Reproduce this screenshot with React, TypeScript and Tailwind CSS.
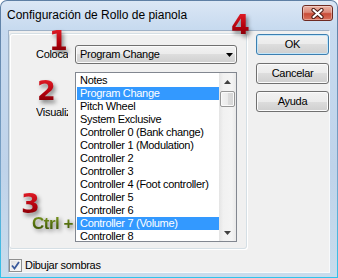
import React from "react";

const items = [
  "Notes",
  "Program Change",
  "Pitch Wheel",
  "System Exclusive",
  "Controller 0 (Bank change)",
  "Controller 1 (Modulation)",
  "Controller 2",
  "Controller 3",
  "Controller 4 (Foot controller)",
  "Controller 5",
  "Controller 6",
  "Controller 7 (Volume)",
  "Controller 8",
];
const selected = [1, 11];

const btnBase =
  "w-[73px] h-[21px] rounded-[3px] border flex items-center justify-center bg-[linear-gradient(#f2f2f2_0%,#ebebeb_50%,#dddddd_50%,#cfcfcf_100%)]";

function Arrow({ up }: { up?: boolean }) {
  return (
    <svg width="7" height="4" viewBox="0 0 7 4">
      {up ? (
        <polygon points="3.5,0 7,4 0,4" fill="#404040" />
      ) : (
        <polygon points="0,0 7,0 3.5,4" fill="#404040" />
      )}
    </svg>
  );
}

const redNum =
  "absolute font-['DejaVu_Sans',sans-serif] font-bold text-[27px] leading-[27px] tracking-normal text-transparent bg-clip-text bg-[linear-gradient(#e8202a,#b0000c_60%,#7a0006)] drop-shadow-[2px_3px_2px_rgba(0,0,0,0.45)]";

export default function App() {
  return (
    <div className="w-[338px] h-[278px] relative font-['Liberation_Sans',Arial,sans-serif] text-[11px] tracking-[-0.3px] leading-[13px] text-black">
      <div className="w-full h-full rounded-t-[7px] p-[1px] bg-[linear-gradient(#5e7fa4,#7aa3c8_60%,#2fc3ec)]">
        <div className="w-full h-full rounded-t-[6px] flex flex-col bg-[linear-gradient(#dbe7f5_0px,#c7daef_28px,#bfd3ea_60%,#c8dcec)]">
          {/* Title bar */}
          <div className="h-[29px] shrink-0 flex items-start justify-between pl-[6px] pr-[4px]">
            <div className="mt-[7px] text-[12px] leading-[14px] tracking-normal text-black">
              Configuración de Rollo de pianola
            </div>
            <div className="mt-[4px] w-[31px] h-[16px] rounded-[3px] border border-[#6e2a22] bg-[linear-gradient(#ebb3a5_0%,#db8a7a_45%,#c84c38_55%,#d9715c_100%)] shadow-[inset_0_0_0_1px_rgba(255,255,255,0.35)] flex items-center justify-center">
              <svg width="13" height="11" viewBox="0 0 13 11">
                <path d="M2.5 2 L10.5 9 M10.5 2 L2.5 9" stroke="#4a1a14" strokeWidth="4.2" strokeLinecap="round" />
                <path d="M2.5 2 L10.5 9 M10.5 2 L2.5 9" stroke="#ffffff" strokeWidth="2.2" strokeLinecap="round" />
              </svg>
            </div>
          </div>

          {/* Client area */}
          <div className="flex-1 mx-[7px] mb-[4px] bg-[#f0f0f0] border border-t-[#9fb2c7] border-l-[#9fb2c7] border-r-[#f7f9fb] border-b-[#f7f9fb] flex flex-col">
            <div className="flex items-start pt-[2px]">
              {/* Group box */}
              <div className="w-[238px] h-[216px] rounded-[3px] border border-[#d5dfe5] shadow-[inset_1px_1px_0_#ffffff,1px_1px_0_#ffffff] pl-[26px] pt-[11px] flex flex-col">
                <div className="flex items-center">
                  <div className="w-[32px] overflow-hidden whitespace-nowrap">Colocar</div>
                  <div className="ml-[7px] w-[162px] h-[19px] rounded-[3px] border border-[#707070] bg-[linear-gradient(#f2f2f2_0%,#ebebeb_50%,#dddddd_50%,#cfcfcf_100%)] shadow-[inset_0_0_0_1px_#fbfbfb] flex items-center justify-between pl-[4px] pr-[3px]">
                    <span>Program Change</span>
                    <svg width="7" height="4" viewBox="0 0 7 4">
                      <polygon points="0,0 7,0 3.5,4" fill="#000" />
                    </svg>
                  </div>
                </div>
                <div className="flex items-start mt-[8px]">
                  <div className="w-[32px] overflow-hidden whitespace-nowrap mt-[34px]">Visualizar</div>
                  <div className="ml-[7px] w-[162px] h-[170px] border border-[#828790] bg-white flex">
                    <div className="flex-1 pl-[1px] pt-[1px] overflow-hidden">
                      {items.map((t, i) => (
                        <div
                          key={t}
                          className={
                            "h-[13px] pl-[3px] whitespace-nowrap " +
                            (selected.includes(i) ? "bg-[#3399ff] text-white" : "")
                          }
                        >
                          {t}
                        </div>
                      ))}
                    </div>
                    <div className="w-[17px] flex flex-col bg-[linear-gradient(90deg,#e4e4e4,#f1f1f1_25%,#f4f4f4_75%,#e9e9e9)]">
                      <div className="h-[17px] flex items-center justify-center">
                        <Arrow up />
                      </div>
                      <div className="mt-[1px] mx-[1px] h-[16px] rounded-[2px] border border-[#979797] bg-[linear-gradient(90deg,#f3f3f3,#ebebeb_50%,#dcdcdc_51%,#d6d6d6)] shadow-[inset_0_0_0_1px_#fafafa]" />
                      <div className="flex-1" />
                      <div className="h-[17px] flex items-center justify-center">
                        <Arrow />
                      </div>
                    </div>
                  </div>
                </div>
              </div>

              {/* Buttons */}
              <div className="ml-[9px] pt-[1px] flex flex-col">
                <div className={btnBase + " border-[#3c7fb1] shadow-[inset_0_0_0_1px_#c4e6f9]"}>OK</div>
                <div className={btnBase + " mt-[8px] border-[#707070] shadow-[inset_0_0_0_1px_#fbfbfb]"}>Cancelar</div>
                <div className={btnBase + " mt-[7px] border-[#707070] shadow-[inset_0_0_0_1px_#fbfbfb]"}>Ayuda</div>
              </div>
            </div>

            {/* Checkbox */}
            <div className="mt-[10px] flex items-center">
              <div className="w-[13px] h-[13px] border border-[#8e8f8f] bg-[linear-gradient(135deg,#dcdcdc,#ffffff)] shadow-[inset_0_0_0_1px_#f4f4f4] flex items-center justify-center">
                <svg width="9" height="9" viewBox="0 0 9 9">
                  <path d="M1 4.5 L3.5 7.5 L8 1" stroke="#3a5a9c" strokeWidth="1.8" fill="none" />
                </svg>
              </div>
              <span className="ml-[3px]">Dibujar sombras</span>
            </div>
          </div>
        </div>
      </div>

      {/* Annotations */}
      <div className={redNum + " left-[49px] top-[27px]"}>1</div>
      <div className={redNum + " left-[37px] top-[77px]"}>2</div>
      <div className={redNum + " left-[21px] top-[190px]"}>3</div>
      <div className={redNum + " left-[231px] top-[11px]"}>4</div>
      <div className="absolute left-[32px] top-[215px] font-bold text-[17px] leading-[17px] tracking-[-0.5px] text-transparent bg-clip-text bg-[linear-gradient(#7d9a22,#4f6a0a_60%,#3a5004)] drop-shadow-[2px_2px_2px_rgba(0,0,0,0.45)] whitespace-nowrap">
        Ctrl +
      </div>
    </div>
  );
}
